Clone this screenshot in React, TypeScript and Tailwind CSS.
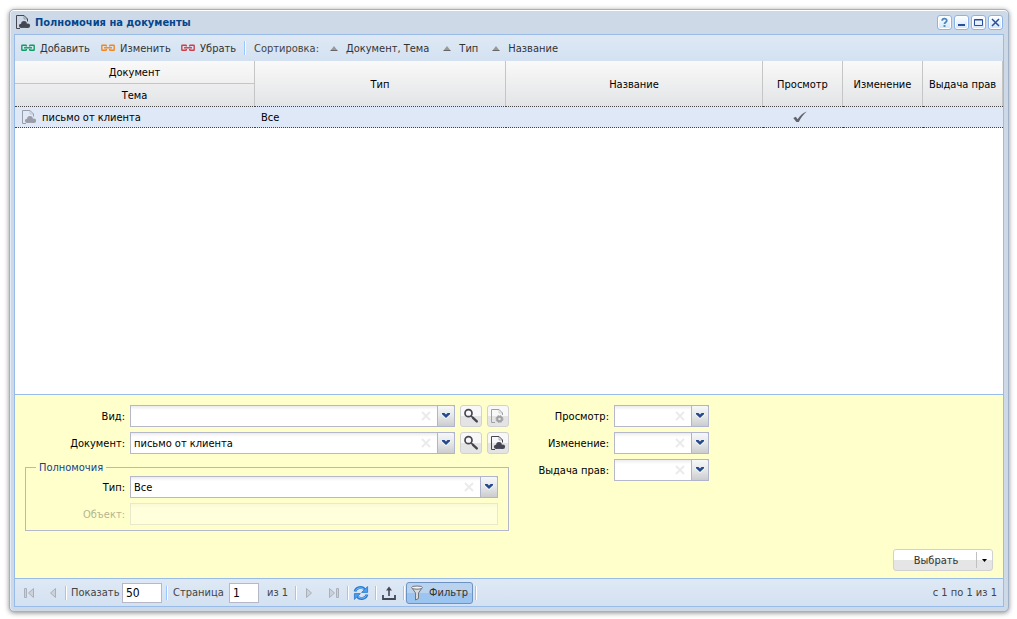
import type { ReactNode } from "react";
import clsx from "clsx";

const LINK_ACTIONS = [
  { label: "Добавить", color: "text-[#0f9d63]" },
  { label: "Изменить", color: "text-[#f5851f]" },
  { label: "Убрать", color: "text-[#cf3f4a]" },
];

const SORTS = ["Документ, Тема", "Тип", "Название"];

type Grant = {
  subject: string;
  type: string;
  name: string;
  view: boolean;
  edit: boolean;
  share: boolean;
};

const GRANTS: Grant[] = [
  { subject: "письмо от клиента", type: "Все", name: "", view: true, edit: false, share: false },
];

function LinkIcon({ className }: { className: string }) {
  return (
    <svg width="14" height="8" viewBox="0 0 14 8" className={className} fill="none" stroke="currentColor" strokeWidth="1.4">
      <path d="M5.3 2.6V1.7Q5.3 1.2 4.8 1.2H1.3Q.8 1.2 .8 1.7V5.8Q.8 6.3 1.3 6.3H4.8Q5.3 6.3 5.3 5.8V5" />
      <path d="M8.7 2.6V1.7Q8.7 1.2 9.2 1.2H12.7Q13.2 1.2 13.2 1.7V5.8Q13.2 6.3 12.7 6.3H9.2Q8.7 6.3 8.7 5.8V5" />
      <path d="M3 3.8H11" />
    </svg>
  );
}

function CloudDocIcon({ className }: { className?: string }) {
  return (
    <svg width="16" height="16" viewBox="0 0 16 16" className={clsx("shrink-0", className)}>
      <path d="M5 14.5H1.5V1.5H9L12.5 5V7.5" fill="none" stroke="currentColor" />
      <path d="M9 1.5V5H12.5" fill="none" stroke="currentColor" strokeWidth=".8" opacity="0.5" />
      <g fill="currentColor">
        <circle cx="9" cy="9.9" r="2.9" />
        <circle cx="6" cy="11.8" r="2.1" />
        <circle cx="12.9" cy="11.7" r="2.2" />
        <path d="M6 11H13V13.9H6Z" />
      </g>
    </svg>
  );
}

function GearDocIcon() {
  return (
    <svg width="16" height="16" viewBox="0 0 16 16" fill="none" stroke="currentColor">
      <path d="M5 14.5H1.5V1.5H9L12.5 5V7" />
      <path d="M9 1.5V5H12.5" strokeWidth=".8" opacity="0.5" />
      <circle cx="9.5" cy="11" r="2.3" strokeWidth="2" />
      <circle cx="9.5" cy="11" r="3.5" strokeWidth="1" strokeDasharray="1.6 1.15" />
    </svg>
  );
}

function SearchIcon() {
  return (
    <svg width="16" height="16" viewBox="0 0 16 16" fill="none" stroke="currentColor">
      <circle cx="5.5" cy="5.2" r="3.5" strokeWidth="1.7" />
      <path d="M8.2 8L9.8 9.6" strokeWidth="1.5" />
      <path d="M10 9.8L13.8 13.4" strokeWidth="2.4" strokeLinecap="round" />
    </svg>
  );
}

function SortIcon() {
  return (
    <svg width="8" height="5" viewBox="0 0 8 5" className="shrink-0">
      <path d="M4 0L7.5 4.5H.5Z" fill="#999" />
      <path d="M.5 4H7.5V5H.5Z" fill="#666" />
    </svg>
  );
}

function Separator({ className }: { className?: string }) {
  return <span className={clsx("w-0.5 shrink-0 border-l border-[#98c8ff] bg-white", className)} />;
}

function WindowTool({ label, children }: { label: string; children: ReactNode }) {
  return (
    <button
      type="button"
      aria-label={label}
      className="flex size-[15px] items-center justify-center rounded-[3px] border border-[#8db4e6] bg-linear-to-b from-white to-[#cfe6fd] text-[#2a4d9c] shadow-[inset_0_0_0_1px_#fff]"
    >
      <svg width="13" height="13" viewBox="0 0 13 13" fill="none" stroke="currentColor">
        {children}
      </svg>
    </button>
  );
}

function Field({ id, label, disabled, labelClass = "w-25", children }: {
  id: string;
  label: string;
  disabled?: boolean;
  labelClass?: string;
  children: ReactNode;
}) {
  return (
    <div className="flex items-center gap-[5px]">
      <label htmlFor={id} className={clsx("shrink-0 text-right", labelClass, disabled && "opacity-30")}>
        {label}:
      </label>
      {children}
    </div>
  );
}

function Combo({ id, value = "", className = "flex-1" }: { id: string; value?: string; className?: string }) {
  return (
    <div className={clsx("relative h-[22px]", className)}>
      <select
        id={id}
        defaultValue={value}
        className="size-full appearance-none border border-[#b5b8c8] bg-white bg-linear-to-b from-[#ececee] to-white to-20% pt-px pr-9 pl-[3px] text-black outline-none"
      >
        <option value={value}>{value}</option>
      </select>
      <span className="pointer-events-none absolute inset-y-0 right-0 flex">
        <svg width="22" height="22" viewBox="0 0 22 22" stroke="#ebebeb" strokeWidth="2">
          <path d="M7 7L15 15M15 7L7 15" />
        </svg>
        <span className="flex w-[18px] items-center justify-center rounded-tr-xs border border-[#b0b4cc] bg-linear-to-b from-[#f6f7f8] via-[#e6e7e9] via-50% to-[#cbccce]">
          <svg width="10" height="7" viewBox="0 0 10 7" className="mb-0.5">
            <path d="M0 2H10L5 7Z" fill="#fff" />
            <path d="M1 1H3.5L5 2.5L6.5 1H9V2.2L5 6L1 2.2Z" fill="#254a8c" />
          </svg>
        </span>
      </span>
    </div>
  );
}

function IconButton({ label, disabled, children }: { label: string; disabled?: boolean; children: ReactNode }) {
  return (
    <button
      type="button"
      aria-label={label}
      disabled={disabled}
      className={clsx(
        "flex size-[22px] shrink-0 items-center justify-center rounded-[3px] border border-[#d1d1d1] bg-linear-to-b from-[#f8f8f8] from-50% to-[#e4e4e4] to-50%",
        disabled ? "text-[#a0a0a4]" : "text-[#464653]"
      )}
    >
      {children}
    </button>
  );
}

function PageButton({ label, className, d, bar }: { label: string; className: string; d: string; bar?: string }) {
  return (
    <button type="button" aria-label={label} disabled className={clsx("flex h-[22px] items-center justify-center", className)}>
      <svg width="16" height="16" viewBox="0 0 16 16" fill="#cdd2d8" stroke="#aab0b9" strokeWidth="1">
        <path d={d} />
        {bar && <path d={bar} />}
      </svg>
    </button>
  );
}

function GrantsTable() {
  const head = "border-r border-[#c5c5c5] p-0 text-center font-normal";
  const tall = "border-r border-[#c5c5c5] bg-linear-to-b from-[#f9f9f9] to-[#e3e4e6] p-0 pt-px text-center font-normal";
  const cell = "h-[22px] border-y border-dotted border-[#444] bg-[#dfe8f6] p-0";
  return (
    <table className="w-full table-fixed border-separate border-spacing-0">
      <colgroup>
        <col className="w-60" />
        <col className="w-[251px]" />
        <col />
        <col className="w-20" />
        <col className="w-20" />
        <col className="w-20" />
      </colgroup>
      <thead>
        <tr className="h-[23px]">
          <th className={clsx(head, "border-b bg-linear-to-b from-[#f9f9f9] to-[#f0f0f1]")}>Документ</th>
          {["Тип", "Название", "Просмотр", "Изменение", "Выдача прав"].map((title) => (
            <th key={title} rowSpan={2} className={tall}>
              {title}
            </th>
          ))}
        </tr>
        <tr className="h-[22px]">
          <th className={clsx(head, "bg-linear-to-b from-[#eeeeef] to-[#e3e4e6]")}>Тема</th>
        </tr>
      </thead>
      <tbody>
        {GRANTS.map((g) => (
          <tr key={g.subject}>
            <td className={cell}>
              <span className="flex items-center gap-[5px] pl-1.5">
                <CloudDocIcon className="text-[#9a9ca8]" />
                {g.subject}
              </span>
            </td>
            <td className={clsx(cell, "pl-1.5")}>{g.type}</td>
            <td className={cell}>{g.name}</td>
            {[g.view, g.edit, g.share].map((on, i) => (
              <td key={i} className={clsx(cell, "pr-1.5")}>
                {on && (
                  <svg width="14" height="12" viewBox="0 0 14 12" className="mx-auto" aria-label="Да">
                    <path d="M.3 7L2.8 5.8L4.6 8.2C7 4.6 9.8 1.6 13.8.4C10.5 3 7.8 6.8 5.8 11H3.4Z" fill="#62636f" />
                  </svg>
                )}
              </td>
            ))}
          </tr>
        ))}
      </tbody>
    </table>
  );
}

function FilterForm() {
  return (
    <form className="border-t border-[#99bbe8] bg-[#ffffcc] px-2.5 pt-2.5 pb-[7px] text-black">
      <div className="flex">
        <div className="w-[484px]">
          <div className="mb-[7px] flex flex-col gap-[5px]">
            <Field id="kind" label="Вид">
              <Combo id="kind" />
              <IconButton label="Найти вид">
                <SearchIcon />
              </IconButton>
              <IconButton label="Настроить вид" disabled>
                <GearDocIcon />
              </IconButton>
            </Field>
            <Field id="document" label="Документ">
              <Combo id="document" value="письмо от клиента" />
              <IconButton label="Найти документ">
                <SearchIcon />
              </IconButton>
              <IconButton label="Открыть документ">
                <CloudDocIcon />
              </IconButton>
            </Field>
          </div>
          <fieldset className="border border-[#b5b8c8] pt-0.5 pr-2.5 pb-[5px]">
            <legend className="ml-2.5 px-[3px] leading-[13px] text-[#15428b]">Полномочия</legend>
            <div className="flex flex-col gap-[5px]">
              <Field id="type" label="Тип" labelClass="w-[99px]">
                <Combo id="type" value="Все" />
              </Field>
              <Field id="object" label="Объект" labelClass="w-[99px]" disabled>
                <input
                  id="object"
                  disabled
                  className="h-[22px] min-w-0 flex-1 border border-[#b5b8c8] bg-white bg-linear-to-b from-[#ececee] to-white to-20% px-[3px] opacity-30"
                />
              </Field>
            </div>
          </fieldset>
        </div>
        <div className="flex flex-col gap-[5px]">
          <Field id="view" label="Просмотр">
            <Combo id="view" className="w-[95px]" />
          </Field>
          <Field id="edit" label="Изменение">
            <Combo id="edit" className="w-[95px]" />
          </Field>
          <Field id="share" label="Выдача прав">
            <Combo id="share" className="w-[95px]" />
          </Field>
        </div>
      </div>
      <div className="mt-[18px] flex justify-end">
        <div className="flex h-[22px] w-25 rounded-[3px] border border-[#d1d1d1] bg-linear-to-b from-white from-50% to-[#e5e5e5] to-50% text-[#333]">
          <button type="button" className="flex-1 pl-0.5">
            Выбрать
          </button>
          <button type="button" aria-label="Другие действия" className="my-0.5 flex w-4 items-center justify-center border-l border-[#c0c0c0]">
            <svg width="5" height="3" viewBox="0 0 5 3">
              <path d="M0 0H5L2.5 3Z" />
            </svg>
          </button>
        </div>
      </div>
    </form>
  );
}

function Pager() {
  const box = "h-5 border border-[#b5b8c8] bg-white px-[3px] pt-px text-[12px] text-black outline-none";
  return (
    <footer className="flex h-7 items-center border-t border-[#99bbe8] bg-linear-to-b from-[#dfe9f5] to-[#d3e1f1] pr-1.5 pl-0.5 text-[#444]">
      <PageButton label="Первая страница" className="w-[23px]" d="M12.5 3.5V12.5L7.5 8Z" bar="M3.5 3.5H5.5V12.5H3.5Z" />
      <PageButton label="Предыдущая страница" className="w-[25px]" d="M10.5 3.5V12.5L5.5 8Z" />
      <Separator className="h-3.5" />
      <label htmlFor="page-size" className="w-[55px] pl-1">Показать</label>
      <input id="page-size" defaultValue="50" className={clsx(box, "w-10")} />
      <Separator className="ml-1 h-3.5" />
      <label htmlFor="page" className="w-[61px] pl-[5px]">Страница</label>
      <input id="page" defaultValue="1" className={clsx(box, "w-[30px]")} />
      <span className="w-9 pl-2">из 1</span>
      <Separator className="h-3.5" />
      <PageButton label="Следующая страница" className="w-6" d="M5.5 3.5V12.5L10.5 8Z" />
      <PageButton label="Последняя страница" className="w-[26px]" d="M3.5 3.5V12.5L8.5 8Z" bar="M10.5 3.5H12.5V12.5H10.5Z" />
      <Separator className="h-3.5" />
      <button type="button" aria-label="Обновить" className="flex w-[26px] justify-center pr-0.5">
        <svg width="16" height="16" viewBox="0 0 16 16" fill="none">
          <path d="M2 6.5C3 2.5 8.5 .8 11.6 4.2" stroke="#2a7bd0" strokeWidth="2.8" />
          <path d="M2.6 5.6C4 2.8 8.3 1.8 11 4.4" stroke="#8cc4f8" strokeWidth="1" />
          <path d="M14.6 1.6V7.4H8.6Z" fill="#4a9ff0" stroke="#2a76c8" strokeWidth=".8" />
          <path d="M14 9.5C13 13.5 7.5 15.2 4.4 11.8" stroke="#2a7bd0" strokeWidth="2.8" />
          <path d="M13.4 10.4C12 13.2 7.7 14.2 5 11.6" stroke="#8cc4f8" strokeWidth="1" />
          <path d="M1.4 14.4V8.6H7.4Z" fill="#4a9ff0" stroke="#2a76c8" strokeWidth=".8" />
        </svg>
      </button>
      <Separator className="h-3.5" />
      <button type="button" aria-label="Выгрузить" className="flex w-[26px] justify-center pr-0.5">
        <svg width="16" height="16" viewBox="0 0 16 16" fill="none" stroke="#464653">
          <path d="M2 10V14H14V10" strokeWidth="1.8" />
          <path d="M8 11V4" strokeWidth="1.6" />
          <path d="M5 5.6L8 1.6L11 5.6Z" fill="#464653" stroke="none" />
        </svg>
      </button>
      <Separator className="h-3.5" />
      <button
        type="button"
        aria-pressed="true"
        className="ml-px flex h-[22px] w-[67px] items-center gap-1 rounded-[3px] border border-[#6c93c4] bg-linear-to-b from-[#b9d2ee] from-50% to-[#9cc4f0] to-50% pl-0.5 text-[#333]"
      >
        <svg width="16" height="16" viewBox="0 0 16 16" fill="#d8dade" stroke="#6f757d">
          <path d="M3 3L6.5 8V15L9.5 13.5V8L13 3Z" />
          <ellipse cx="8" cy="2.6" rx="5.5" ry="1.6" fill="#f4f4f4" />
        </svg>
        Фильтр
      </button>
      <Separator className="ml-0.5 h-3.5" />
      <span className="ml-auto">с 1 по 1 из 1</span>
    </footer>
  );
}

export default function App() {
  return (
    <div className="flex min-h-screen bg-white pt-[9px] pr-2 pb-[7px] pl-[9px] font-['DejaVu_Sans_Condensed','Noto_Sans',sans-serif] text-[11px] leading-[15px] text-black">
      <section className="flex flex-1 flex-col rounded-[5px] border border-[#a2b1c5] bg-[#ced9e7] px-1 pb-1 shadow-[0_1px_5px_rgba(0,0,0,0.45),inset_0_1px_0_#fff,inset_1px_0_0_#e6edf6]">
        <header className="flex h-6 items-center gap-1 pr-px pl-px">
          <CloudDocIcon className="text-[#464653]" />
          <h1 className="font-bold text-[#04468c]">Полномочия на документы</h1>
          <div className="ml-auto flex gap-0.5">
            <WindowTool label="Справка">
              <path d="M4.2 4.8C4.2 2 8.8 2 8.8 4.6C8.8 6.2 6.5 6.2 6.5 8" stroke="#4a86b8" strokeWidth="1.8" />
              <path d="M5.5 10H7.5" stroke="#4a86b8" strokeWidth="1.8" />
            </WindowTool>
            <WindowTool label="Свернуть">
              <path d="M3 9H10" strokeWidth="2" />
            </WindowTool>
            <WindowTool label="Развернуть">
              <path d="M2.5 3.5H10.5V9.5H2.5ZM2.5 4H10.5" />
            </WindowTool>
            <WindowTool label="Закрыть">
              <path d="M3 3L10 10M10 3L3 10" strokeWidth="1.5" />
            </WindowTool>
          </div>
        </header>

        <div className="flex flex-1 flex-col border border-[#99bbe8] bg-white">
          <div role="toolbar" className="flex h-[26px] items-center bg-linear-to-b from-[#dfe9f5] to-[#d3e1f1] pl-[3px] text-[#333]">
            {LINK_ACTIONS.map((a) => (
              <button key={a.label} type="button" className="flex min-w-20 items-center gap-[5px] pl-[3px]">
                <LinkIcon className={a.color} />
                {a.label}
              </button>
            ))}
            <Separator className="-ml-3.5 h-3.5" />
            <span className="w-[84px] pl-2 text-[#444]">Сортировка:</span>
            {SORTS.map((s) => (
              <button key={s} type="button" className="mr-3.5 flex items-center gap-2">
                <SortIcon />
                {s}
              </button>
            ))}
          </div>
          <GrantsTable />
          <div className="flex-1" />
          <FilterForm />
          <Pager />
        </div>
      </section>
    </div>
  );
}
